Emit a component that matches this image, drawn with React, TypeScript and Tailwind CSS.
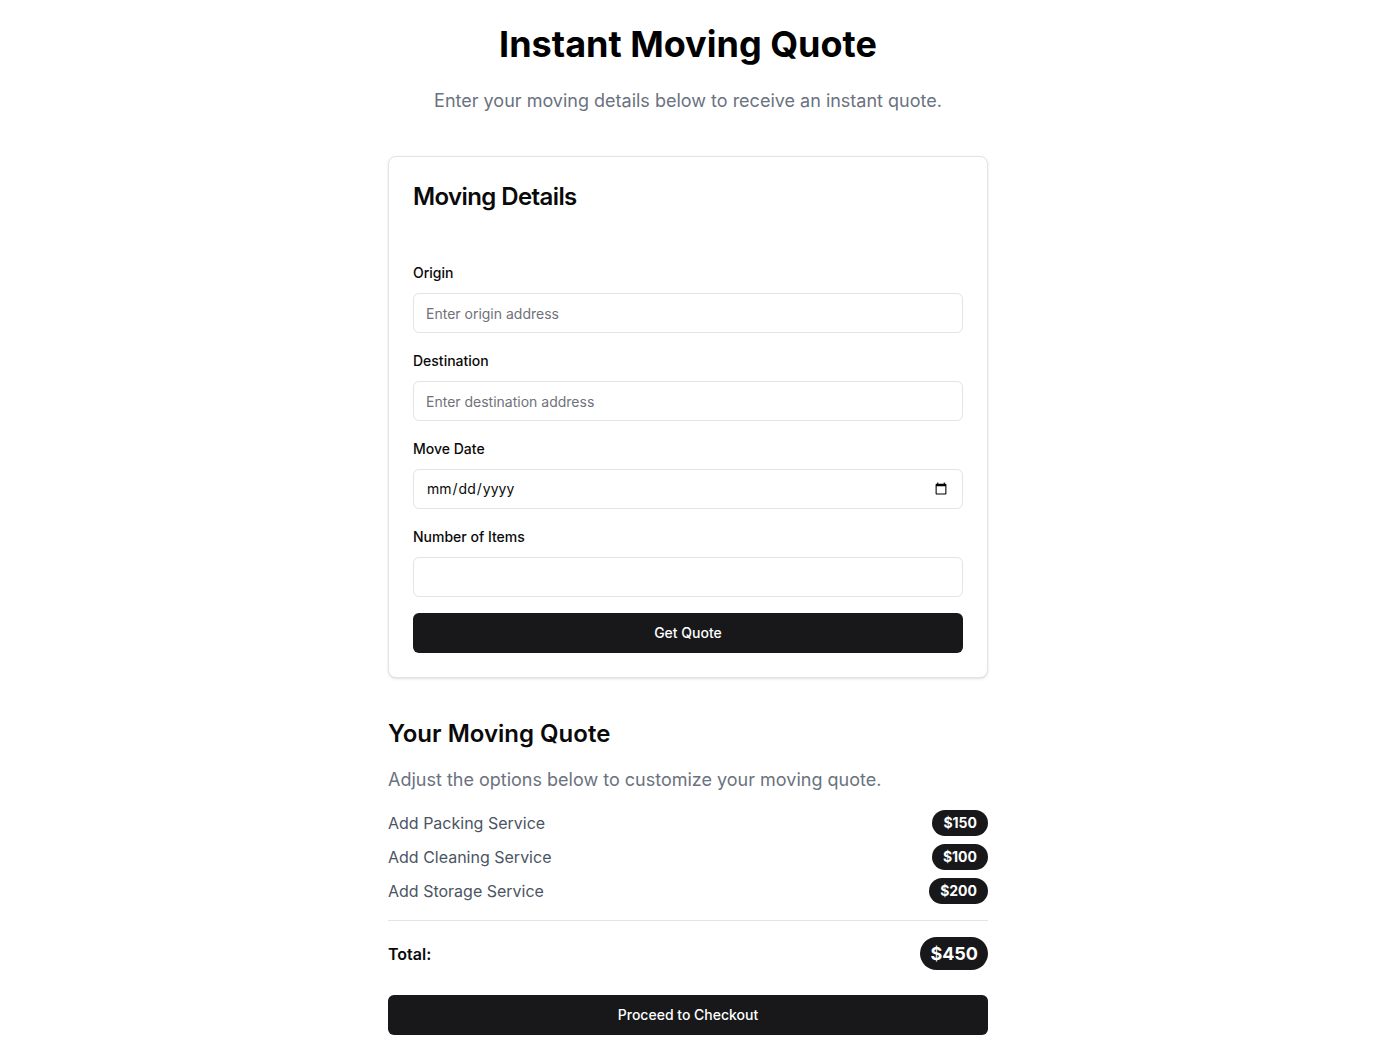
import React from "react";

const inter = { fontFamily: "Inter, 'Noto Sans', sans-serif" };

function Field({ label, children }: { label: string; children: React.ReactNode }) {
  return (
    <div className="flex flex-col">
      <label className="h-5 mb-[10px] text-sm font-medium leading-5 text-[#0a0a0a]">{label}</label>
      {children}
    </div>
  );
}

const inputCls =
  "h-10 w-full rounded-md border border-[#e4e4e7] bg-white px-3 text-sm text-[#0a0a0a] placeholder:text-[#71717a] outline-none";

export default function App() {
  return (
    <div className="min-h-screen bg-white flex flex-col items-center pt-6 pb-6" style={inter}>
      <h1 className="text-4xl font-bold text-black leading-10">Instant Moving Quote</h1>
      <p className="mt-[23px] text-lg leading-7 text-[#6b7280]">Enter your moving details below to receive an instant quote.</p>

      <div className="mt-[41px] w-[600px] rounded-lg border border-[#e4e4e7] bg-white p-6 shadow-sm">
        <h2 className="text-2xl font-semibold leading-8 text-[#0a0a0a] tracking-tight">Moving Details</h2>
        <div className="mt-[50px] flex flex-col gap-[18px]">
          <Field label="Origin">
            <input className={inputCls} placeholder="Enter origin address" style={inter} />
          </Field>
          <Field label="Destination">
            <input className={inputCls} placeholder="Enter destination address" style={inter} />
          </Field>
          <Field label="Move Date">
            <input type="date" className={inputCls} style={inter} />
          </Field>
          <Field label="Number of Items">
            <input type="number" className={inputCls} style={inter} />
          </Field>
        </div>
        <button className="mt-4 h-10 w-full rounded-md bg-[#18181b] text-sm font-medium text-white" style={inter}>
          Get Quote
        </button>
      </div>

      <div className="mt-10 w-[600px]">
        <h2 className="text-2xl font-semibold leading-8 text-[#0a0a0a]">Your Moving Quote</h2>
        <p className="mt-4 text-lg leading-7 text-[#6b7280]">Adjust the options below to customize your moving quote.</p>
        <div className="mt-4 flex flex-col gap-2">
          {[
            ["Add Packing Service", "$150"],
            ["Add Cleaning Service", "$100"],
            ["Add Storage Service", "$200"],
          ].map(([name, price]) => (
            <div key={name} className="flex items-center justify-between">
              <span className="text-base text-[#4b5563]">{name}</span>
              <span className="h-[26px] inline-flex items-center rounded-full bg-[#18181b] px-[11px] text-sm font-bold text-white">
                {price}
              </span>
            </div>
          ))}
        </div>
        <div className="mt-4 h-px bg-[#e4e4e7]" />
        <div className="mt-4 flex items-center justify-between">
          <span className="text-base font-semibold text-[#0a0a0a]">Total:</span>
          <span className="h-[33px] inline-flex items-center rounded-full bg-[#18181b] px-[10px] text-lg font-bold text-white">
            $450
          </span>
        </div>
        <button className="mt-[25px] h-10 w-full rounded-md bg-[#18181b] text-sm font-medium text-white" style={inter}>
          Proceed to Checkout
        </button>
      </div>
    </div>
  );
}
